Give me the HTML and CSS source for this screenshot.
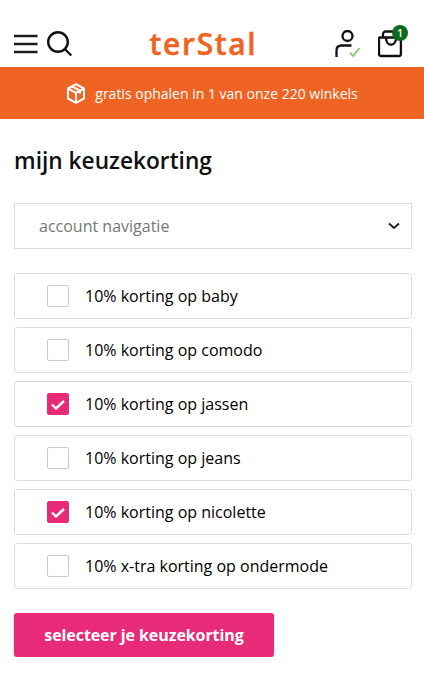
FILE: index.html
```html
<!DOCTYPE html>
<html lang="nl">
<head>
<meta charset="utf-8">
<title>mijn keuzekorting</title>
<link rel="stylesheet" href="styles.css">
</head>
<body>
<header class="header">
  <div class="header-side">
    <svg class="icon-menu" width="24" height="20" viewBox="0 0 24 20" fill="none" stroke="#1c1c1c" stroke-width="2.6"><path d="M0 2h23.500M0 10h23.500M0 18h23.500"/></svg>
    <svg class="icon-search" width="26" height="26" viewBox="0 0 26 26" fill="none" stroke="#111" stroke-width="2.4"><circle cx="11" cy="11" r="9.800"/><path d="M17.800 18l6.500 6.500"/></svg>
  </div>
  <div class="logo">terStal</div>
  <div class="header-side header-right">
    <svg width="28" height="28" viewBox="0 0 28 28" fill="none" stroke="#111" stroke-width="2.3"><circle cx="13.500" cy="6" r="5"/><path d="M2.500 27v-6.500c0-3 2-5 5-5h10"/><path d="M16 22.500l3 3.500 6.500-8" stroke="#8cc56a" stroke-width="1.800"/></svg>
    <div class="cart">
      <svg width="25" height="28" viewBox="0 0 25 28" fill="none" stroke="#111" stroke-width="2.300"><path d="M5 7.500V4a2.500 2.500 0 0 1 2.500-2.500H18"/><path d="M1.800 7.500h20.400a.7.7 0 0 1 .7.700V24a2 2 0 0 1-2 2H3a2 2 0 0 1-2-2V8.200a.7.7 0 0 1 .8-.7z"/><path d="M8 8c0 9 10 9 10 0"/></svg>
      <span class="badge">1</span>
    </div>
  </div>
</header>
<div class="banner">
  <svg width="20" height="21" viewBox="0 0 20 21" fill="none" stroke="#fff" stroke-width="2" stroke-linejoin="round"><path d="M10 1.200l8 4.300v10l-8 4.300-8-4.300v-10z"/><path d="M2 5.500l8 4.300 8-4.300M10 9.800v10M6 3.400l8 4.300v3"/></svg>
  <span>gratis ophalen in 1 van onze 220 winkels</span>
</div>
<main class="main">
  <h1 class="title">mijn keuzekorting</h1>
  <div class="select">
    <span>account navigatie</span>
    <svg width="12" height="8" viewBox="0 0 12 8" fill="none" stroke="#222" stroke-width="2"><path d="M1 1.500l5 4.500 5-4.500"/></svg>
  </div>
  <ul class="list">
    <li class="row"><span class="box"></span>10% korting op baby</li>
    <li class="row"><span class="box"></span>10% korting op comodo</li>
    <li class="row"><span class="box checked"><svg width="14" height="11" viewBox="0 0 14 11" fill="none" stroke="#fff" stroke-width="2.400"><path d="M1 5.500l4 4 8-7.500"/></svg></span>10% korting op jassen</li>
    <li class="row"><span class="box"></span>10% korting op jeans</li>
    <li class="row"><span class="box checked"><svg width="14" height="11" viewBox="0 0 14 11" fill="none" stroke="#fff" stroke-width="2.400"><path d="M1 5.500l4 4 8-7.500"/></svg></span>10% korting op nicolette</li>
    <li class="row"><span class="box"></span>10% x-tra korting op ondermode</li>
  </ul>
  <button class="cta" type="button">selecteer je keuzekorting</button>
</main>
</body>
</html>
```
FILE: styles.css
```css
* { box-sizing: border-box; }
html, body { margin: 0; padding: 0; }
body {
  font-family: "Open Sans", "Liberation Sans", sans-serif;
  color: #111;
  background: #fff;
}
.header {
  height: 67px;
  display: flex;
  align-items: center;
  justify-content: space-between;
  padding: 20px 21px 0 14px;
}
.header-side { display: flex; align-items: center; gap: 9px; width: 90px; }
.header-right { justify-content: flex-end; gap: 16px; width: 100px; }
.logo {
  font-family: "Open Sans", sans-serif;
  font-weight: 600;
  font-size: 30px;
  line-height: 1;
  color: #f06423;
  letter-spacing: 1.65px;
  -webkit-text-stroke: 0.5px #f06423;
}
.cart { position: relative; height: 28px; }
.badge {
  position: absolute;
  top: -5px;
  right: -5px;
  width: 16px;
  height: 16px;
  border-radius: 50%;
  background: #0d6b1e;
  color: #fff;
  font-size: 10px;
  font-weight: 600;
  line-height: 16px;
  text-align: center;
}
.banner {
  height: 52px;
  background: #f06423;
  color: #fff;
  font-size: 14px;
  display: flex;
  align-items: center;
  justify-content: center;
  gap: 9px;
}
.main { padding: 0 12px 0 14px; }
.title {
  margin: 26px 0 0;
  font-size: 22.7px;
  line-height: 32px;
  font-weight: 600;
  color: #111;
}
.select {
  margin-top: 26px;
  height: 46px;
  border: 1px solid #dcdce4;
  padding: 0 11px 0 24px;
  display: flex;
  align-items: center;
  justify-content: space-between;
  font-size: 16px;
  color: #777;
}
.list {
  list-style: none;
  margin: 24px 0 0;
  padding: 0;
  display: flex;
  flex-direction: column;
  gap: 8px;
}
.row {
  height: 46px;
  border: 1px solid #dcdce4;
  border-radius: 3px;
  padding-left: 32px;
  display: flex;
  align-items: center;
  gap: 16px;
  font-size: 16px;
  color: #000;
}
.box {
  width: 22px;
  height: 22px;
  flex: none;
  border: 1px solid #ccc;
  border-radius: 2px;
  display: flex;
  align-items: center;
  justify-content: center;
}
.box.checked { background: #e82b78; border-color: #e82b78; }
.cta {
  margin-top: 24px;
  width: 260px;
  height: 44px;
  border: 0;
  border-radius: 3px;
  background: #e82b78;
  box-shadow: 0 1px 3px rgba(0, 0, 0, 0.15);
  color: #fff;
  font-family: inherit;
  font-size: 16px;
  font-weight: 700;
  letter-spacing: -0.08px;
  display: block;
}
```
